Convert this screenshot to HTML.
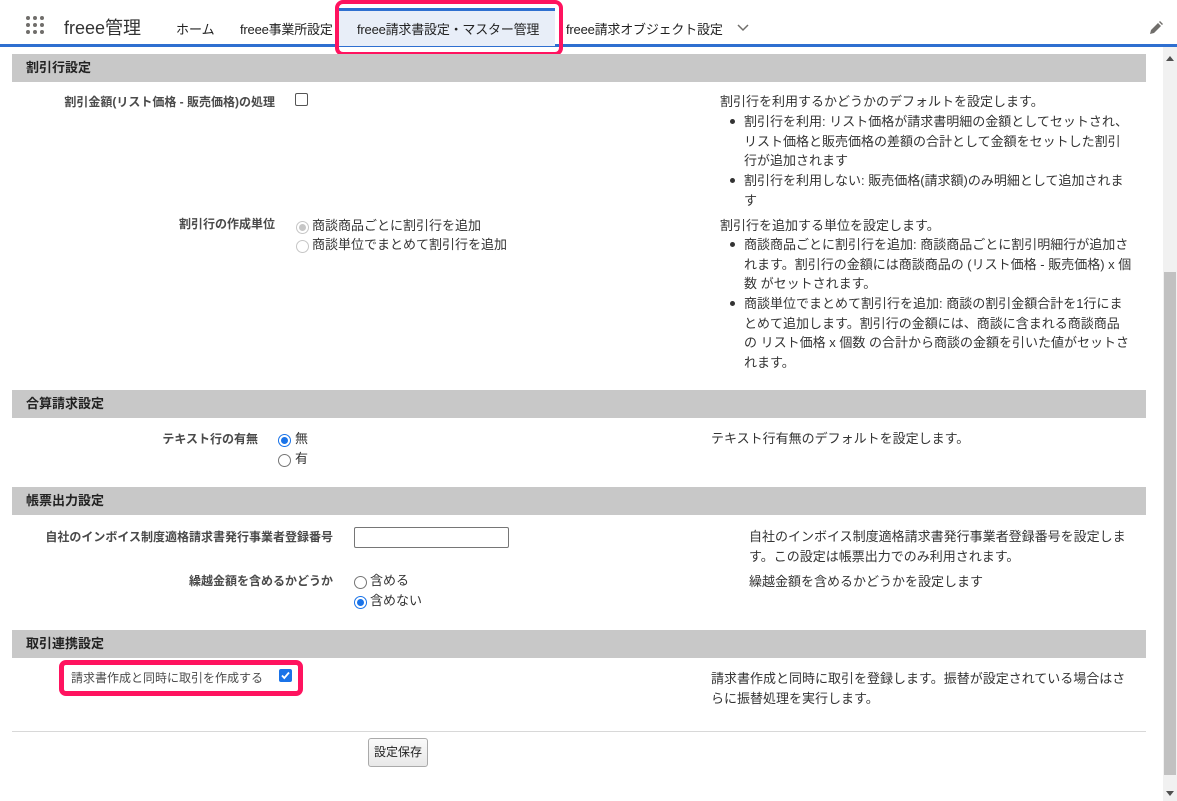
<!DOCTYPE html>
<html><head><meta charset="utf-8"><style>
*{margin:0;padding:0;box-sizing:border-box}
body{width:1177px;height:801px;overflow:hidden;background:#fff;font-family:"Liberation Sans","Noto Sans CJK JP",sans-serif;color:#333;position:relative}
.a{position:absolute;white-space:nowrap}
.t{font-size:13px;line-height:19.5px}
.lbl{font-size:12px;font-weight:bold;color:#4a4a4a;text-align:right}
.sec{position:absolute;left:12px;width:1134px;height:28px;background:#c8c8c8;font-size:13px;font-weight:bold;color:#222;padding-left:14px;line-height:28px}
.bul{position:absolute;width:5px;height:5px;border-radius:50%;background:#333}
.rad{position:absolute;width:13px;height:13px;border-radius:50%;border:1px solid #767676;background:#fff}
.rad.on{border:1px solid #1a73e8}
.rad.on::after{content:"";position:absolute;left:2px;top:2px;width:7px;height:7px;border-radius:50%;background:#1a73e8}
.rad.dis{border-color:#c6c6c6}
.rad.dis.on::after{background:#c6c6c6}
</style></head><body>
<div class="a" style="left:0;top:0;width:1177px;height:45px;background:#fff"></div>
<div class="a" style="left:0;top:44px;width:1177px;height:3px;background:#2e6fd0"></div>
<svg class="a" style="left:25px;top:16px" width="20" height="20" viewBox="0 0 20 20" fill="#706e6b">
<circle cx="3" cy="2" r="2"/><circle cx="10" cy="2" r="2"/><circle cx="17" cy="2" r="2"/>
<circle cx="3" cy="9" r="2"/><circle cx="10" cy="9" r="2"/><circle cx="17" cy="9" r="2"/>
<circle cx="3" cy="16" r="2"/><circle cx="10" cy="16" r="2"/><circle cx="17" cy="16" r="2"/></svg>
<div class="a" style="left:64px;top:14px;font-size:18px;color:#333">freee管理</div>
<div class="a" style="left:176px;top:19px;font-size:13px;color:#222">ホーム</div>
<div class="a" style="left:240px;top:19px;font-size:13px;color:#222;letter-spacing:-0.2px">freee事業所設定</div>
<div class="a" style="left:337px;top:8px;width:218px;height:38px;background:#e8eef8;border-top:3px solid #2e6fd0"></div>
<div class="a" style="left:357px;top:19px;font-size:13px;color:#222;letter-spacing:-0.2px">freee請求書設定・マスター管理</div>
<div class="a" style="left:335px;top:0;width:228px;height:56px;border:4px solid #ff135f;border-radius:8px"></div>
<div class="a" style="left:566px;top:19px;font-size:13px;color:#222;letter-spacing:-0.2px">freee請求オブジェクト設定</div>
<svg class="a" style="left:737px;top:24px" width="12" height="8" viewBox="0 0 12 8"><path d="M1 1l5 5 5-5" fill="none" stroke="#706e6b" stroke-width="1.5"/></svg>
<svg class="a" style="left:1149px;top:21px" width="14" height="14" viewBox="0 0 14 14"><path d="M1 13l1-4 7-7 3 3-7 7z M10 1l1-1 3 3-1 1z" fill="#706e6b"/></svg>
<div class="a" style="left:1163px;top:47px;width:14px;height:754px;background:#f1f1f1"></div>
<div class="a" style="left:1164px;top:272px;width:12px;height:503px;background:#c1c1c1"></div>
<svg class="a" style="left:1166px;top:56px" width="8" height="5"><path d="M0 5L4 0 8 5z" fill="#505050"/></svg>
<svg class="a" style="left:1166px;top:791px" width="8" height="5"><path d="M0 0L4 5 8 0z" fill="#505050"/></svg>

<div class="sec" style="top:54px">割引行設定</div>
<div class="a lbl" style="right:902px;top:93px">割引金額(リスト価格 - 販売価格)の処理</div>
<div class="a" style="left:295px;top:93px;width:13px;height:13px;border:1px solid #555;border-radius:2px"></div>
<div class="a t" style="left:720px;top:92px">割引行を利用するかどうかのデフォルトを設定します。</div>
<div class="bul" style="left:730px;top:119px"></div>
<div class="a t" style="left:744px;top:112px">割引行を利用: リスト価格が請求書明細の金額としてセットされ、<br>リスト価格と販売価格の差額の合計として金額をセットした割引<br>行が追加されます</div>
<div class="bul" style="left:730px;top:178px"></div>
<div class="a t" style="left:744px;top:171px">割引行を利用しない: 販売価格(請求額)のみ明細として追加されま<br>す</div>

<div class="a lbl" style="right:902px;top:215px">割引行の作成単位</div>
<div class="rad dis on" style="left:296px;top:221px"></div>
<div class="a t" style="left:312px;top:216px">商談商品ごとに割引行を追加</div>
<div class="rad dis" style="left:296px;top:240px"></div>
<div class="a t" style="left:312px;top:235px">商談単位でまとめて割引行を追加</div>
<div class="a t" style="left:720px;top:216px">割引行を追加する単位を設定します。</div>
<div class="bul" style="left:730px;top:242px"></div>
<div class="a t" style="left:744px;top:235px">商談商品ごとに割引行を追加: 商談商品ごとに割引明細行が追加さ<br>れます。割引行の金額には商談商品の (リスト価格 - 販売価格) x 個<br>数 がセットされます。</div>
<div class="bul" style="left:730px;top:301px"></div>
<div class="a t" style="left:744px;top:294px">商談単位でまとめて割引行を追加: 商談の割引金額合計を1行にま<br>とめて追加します。割引行の金額には、商談に含まれる商談商品<br>の リスト価格 x 個数 の合計から商談の金額を引いた値がセットさ<br>れます。</div>

<div class="sec" style="top:390px">合算請求設定</div>
<div class="a lbl" style="right:919px;top:430px">テキスト行の有無</div>
<div class="rad on" style="left:278px;top:434px"></div>
<div class="a t" style="left:295px;top:429px">無</div>
<div class="rad" style="left:278px;top:454px"></div>
<div class="a t" style="left:295px;top:449px">有</div>
<div class="a t" style="left:711px;top:429px">テキスト行有無のデフォルトを設定します。</div>

<div class="sec" style="top:487px">帳票出力設定</div>
<div class="a lbl" style="right:844px;top:528px">自社のインボイス制度適格請求書発行事業者登録番号</div>
<div class="a" style="left:354px;top:527px;width:155px;height:21px;border:1px solid #767676;border-radius:2px"></div>
<div class="a t" style="left:749px;top:527px">自社のインボイス制度適格請求書発行事業者登録番号を設定しま<br>す。この設定は帳票出力でのみ利用されます。</div>
<div class="a lbl" style="right:844px;top:572px">繰越金額を含めるかどうか</div>
<div class="rad" style="left:354px;top:576px"></div>
<div class="a t" style="left:370px;top:571px">含める</div>
<div class="rad on" style="left:354px;top:596px"></div>
<div class="a t" style="left:370px;top:591px">含めない</div>
<div class="a t" style="left:749px;top:572px">繰越金額を含めるかどうかを設定します</div>

<div class="sec" style="top:630px">取引連携設定</div>
<div class="a" style="left:59px;top:660px;width:244px;height:36px;border:5px solid #ff135f;border-radius:7px"></div>
<div class="a" style="left:71px;top:669px;font-size:12px;color:#4a4a4a">請求書作成と同時に取引を作成する</div>
<div class="a" style="left:279px;top:669px;width:13px;height:13px;background:#1a73e8;border-radius:2px"></div>
<svg class="a" style="left:280px;top:670px" width="11" height="11" viewBox="0 0 11 11"><path d="M2 5.5l2.3 2.5L9 2.5" fill="none" stroke="#fff" stroke-width="1.8"/></svg>
<div class="a t" style="left:711px;top:669px">請求書作成と同時に取引を登録します。振替が設定されている場合はさ<br>らに振替処理を実行します。</div>

<div class="a" style="left:12px;top:731px;width:1134px;height:1px;background:#d8d8d8"></div>
<div class="a" style="left:368px;top:738px;width:60px;height:29px;border:1px solid #aaa;border-radius:3px;background:linear-gradient(#fafafa,#e8e8e8);font-size:12px;line-height:27px;text-align:center;color:#222">設定保存</div>
</body></html>
